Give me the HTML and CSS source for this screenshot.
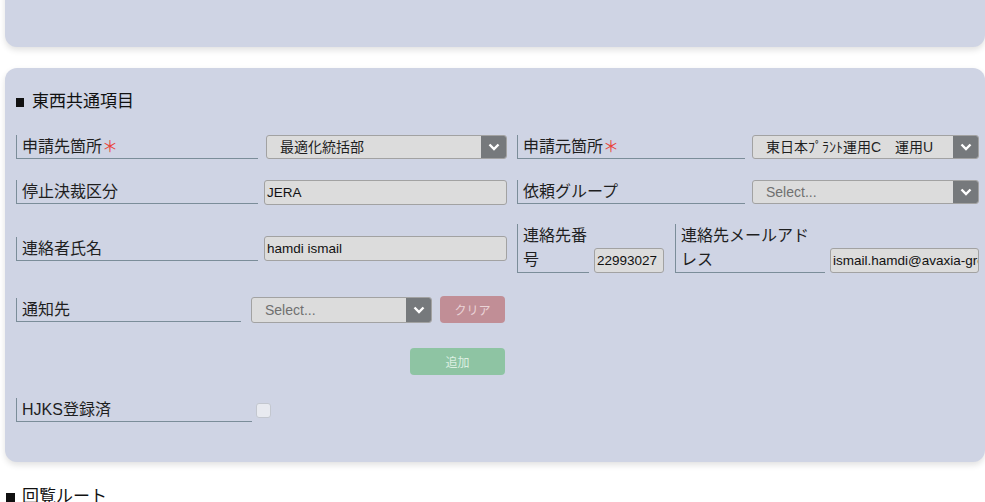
FILE: index.html
```html
<!DOCTYPE html>
<html lang="ja">
<head>
<meta charset="utf-8">
<title>東西共通項目</title>
<link rel="stylesheet" href="styles.css">
</head>
<body>
<div class="page">
  <div class="card card-top"></div>

  <div class="card card-main">
    <div class="section-title"><span class="sq"></span>東西共通項目</div>

    <div class="row row-1">
      <div class="half half-left">
        <div class="label w242">申請先箇所<span class="req">＊</span></div>
        <div class="select w241"><span class="select-text">最適化統括部</span><span class="arrow"><svg width="12" height="8" viewBox="0 0 12 8"><path d="M1.5 1.5 L6 6 L10.5 1.5" fill="none" stroke="#fff" stroke-width="2.4"/></svg></span></div>
      </div>
      <div class="half half-right">
        <div class="label w228">申請元箇所<span class="req">＊</span></div>
        <div class="select w227"><span class="select-text">東日本ﾌﾟﾗﾝﾄ運用C　運用U</span><span class="arrow"><svg width="12" height="8" viewBox="0 0 12 8"><path d="M1.5 1.5 L6 6 L10.5 1.5" fill="none" stroke="#fff" stroke-width="2.4"/></svg></span></div>
      </div>
    </div>

    <div class="row row-2">
      <div class="half half-left">
        <div class="label w242">停止決裁区分</div>
        <div class="input w243">JERA</div>
      </div>
      <div class="half half-right">
        <div class="label w228">依頼グループ</div>
        <div class="select w227"><span class="select-text placeholder">Select...</span><span class="arrow"><svg width="12" height="8" viewBox="0 0 12 8"><path d="M1.5 1.5 L6 6 L10.5 1.5" fill="none" stroke="#fff" stroke-width="2.4"/></svg></span></div>
      </div>
    </div>

    <div class="row row-3">
      <div class="half half-left">
        <div class="label w242">連絡者氏名</div>
        <div class="input w243">hamdi ismail</div>
      </div>
      <div class="half half-right bottom">
        <div class="label label-tall w72">連絡先番号</div>
        <div class="input w70">22993027</div>
        <div class="label label-tall w150 ml11">連絡先メールアドレス</div>
        <div class="input w149">ismail.hamdi@avaxia-group.com</div>
      </div>
    </div>

    <div class="row row-4">
      <div class="label w225">通知先</div>
      <div class="select select-sm w181"><span class="select-text placeholder">Select...</span><span class="arrow"><svg width="12" height="8" viewBox="0 0 12 8"><path d="M1.5 1.5 L6 6 L10.5 1.5" fill="none" stroke="#fff" stroke-width="2.4"/></svg></span></div>
      <button class="btn btn-clear" type="button">クリア</button>
    </div>

    <div class="row row-5">
      <button class="btn btn-add" type="button">追加</button>
    </div>

    <div class="row row-6">
      <div class="label w236">HJKS登録済</div>
      <span class="checkbox"></span>
    </div>
  </div>

  <div class="section-title outside"><span class="sq"></span>回覧ルート</div>
</div>
</body>
</html>
```

FILE: styles.css
```css
html, body {
  margin: 0;
  padding: 0;
  background: #ffffff;
  overflow: hidden;
}

body {
  font-family: "Liberation Sans", "Noto Sans CJK JP", sans-serif;
  color: #1f1f1f;
}

.page {
  width: 985px;
  height: 502px;
  overflow: hidden;
  padding-left: 5px;
  box-sizing: border-box;
}

.card {
  width: 980px;
  background: #cfd4e4;
  border-radius: 12px;
  box-shadow: 0 3px 6px rgba(0, 0, 0, 0.12);
  box-sizing: border-box;
}

.card-top {
  height: 67px;
  margin-top: -20px;
}

.card-main {
  margin-top: 21px;
  padding: 20px 6px 40px 11px;
  display: flex;
  flex-direction: column;
}

.section-title {
  font-family: "Noto Sans CJK JP", sans-serif;
  font-size: 17px;
  line-height: 24px;
  height: 24px;
  color: #111;
  display: flex;
  align-items: center;
}

.sq {
  display: inline-block;
  width: 8px;
  height: 9px;
  background: #111;
  margin: 5px 8px 0 0;
  flex-shrink: 0;
}

.section-title.outside {
  margin-top: 21px;
  padding-left: 1px;
}

.section-title.outside .sq {
  width: 9px;
  margin-right: 7px;
}

.row {
  display: flex;
  align-items: center;
}

.row-1 { margin-top: 23px; height: 24px; }
.row-2 { margin-top: 21px; height: 24px; }
.row-3 { margin-top: 20px; height: 49px; align-items: stretch; }
.row-4 { margin-top: 23px; height: 27px; }
.row-5 { margin-top: 25px; height: 27px; padding-left: 394px; }
.row-6 { margin-top: 23px; height: 24px; }

.half {
  display: flex;
  align-items: center;
}

.half-left {
  width: 491px;
  justify-content: space-between;
}

.half-right {
  margin-left: 10px;
  width: 462px;
  justify-content: space-between;
}

.half-right.bottom {
  align-items: flex-end;
  justify-content: flex-start;
}

.label {
  box-sizing: border-box;
  height: 24px;
  border-left: 1px solid #7b8d99;
  border-bottom: 1px solid #7b8d99;
  padding: 0 6px 0 5px;
  font-size: 16px;
  line-height: 24px;
  white-space: nowrap;
  flex-shrink: 0;
}

.label-tall {
  height: 49px;
  white-space: normal;
  line-height: 24px;
  word-break: break-all;
}

.label-tall.w72 { padding-right: 0; }
.label-tall.w150 { padding-right: 2px; }

.req {
  color: #e8453c;
  font-size: 16px;
}

.w242 { width: 242px; }
.w241 { width: 241px; }
.w243 { width: 243px; }
.w228 { width: 228px; }
.w227 { width: 227px; }
.w225 { width: 225px; }
.w236 { width: 236px; }
.w181 { width: 181px; }
.w72 { width: 72px; }
.w70 { width: 70px; margin-left: 5px; }
.w150 { width: 150px; }
.w149 { width: 149px; margin-left: 5px; }
.ml11 { margin-left: 11px; }

.select {
  box-sizing: border-box;
  height: 24px;
  display: flex;
  align-items: stretch;
  background: #dcdcdc;
  border: 1px solid #a2a2a2;
  border-radius: 3px;
  overflow: hidden;
  flex-shrink: 0;
}

.select-sm {
  height: 26px;
  margin-left: 10px;
}

.select-text {
  flex: 1;
  padding-left: 13px;
  font-size: 14px;
  line-height: 22px;
  color: #1f1f1f;
  white-space: nowrap;
  overflow: hidden;
}

.select-sm .select-text {
  line-height: 24px;
}

.select-text.placeholder {
  color: #707070;
}

.arrow {
  width: 25px;
  background: #76797c;
  display: flex;
  align-items: center;
  justify-content: center;
}

.input {
  box-sizing: border-box;
  height: 25px;
  background: #dcdcdc;
  border: 1px solid #a2a2a2;
  border-radius: 3px;
  padding-left: 2px;
  font-size: 13.5px;
  line-height: 23px;
  color: #111;
  white-space: nowrap;
  overflow: hidden;
  flex-shrink: 0;
}

.btn {
  box-sizing: border-box;
  height: 27px;
  border: none;
  border-radius: 4px;
  font-family: "Noto Sans CJK JP", sans-serif;
  font-size: 12px;
  padding: 0;
  flex-shrink: 0;
}

.btn-clear {
  width: 65px;
  margin-left: 8px;
  background: #c18e96;
  color: #ead3d6;
}

.btn-add {
  width: 95px;
  background: #8ec4a3;
  color: #dcefe2;
}

.checkbox {
  display: block;
  width: 15px;
  height: 15px;
  margin-left: 4px;
  box-sizing: border-box;
  background: #e8eaf0;
  border: 1px solid #c3c7cf;
  border-radius: 3px;
}
```
